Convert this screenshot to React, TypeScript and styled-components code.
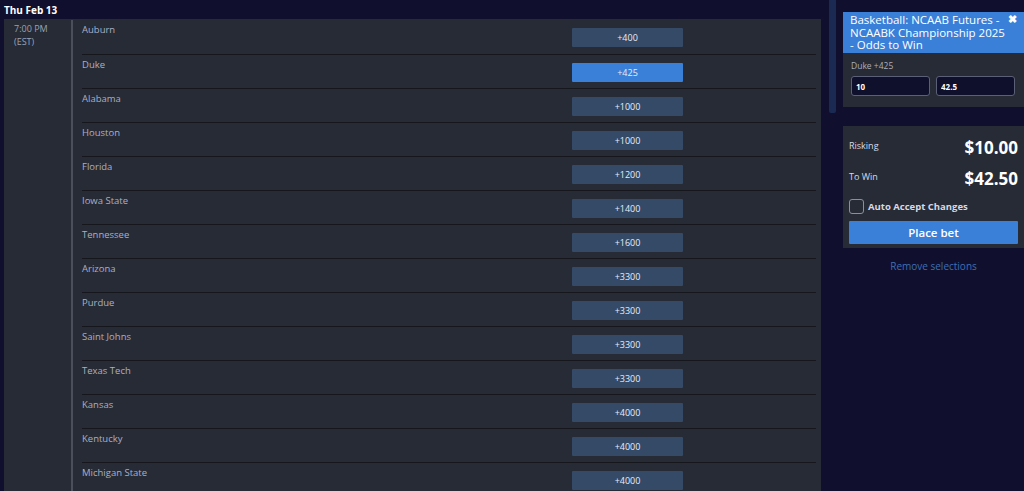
import React from "react";
import styled, { createGlobalStyle } from "styled-components";

const GlobalStyle = createGlobalStyle`
	html, body {
		margin: 0;
		padding: 0;
		background: #10102e;
		overflow: hidden;
	}
	body {
		font-family: "Open Sans", "Noto Sans", sans-serif;
		color: #fff;
	}
`;

type Line = { team: string; odds: string; selected?: boolean };

const LINES: Line[] = [
	{ team: "Auburn", odds: "+400" },
	{ team: "Duke", odds: "+425", selected: true },
	{ team: "Alabama", odds: "+1000" },
	{ team: "Houston", odds: "+1000" },
	{ team: "Florida", odds: "+1200" },
	{ team: "Iowa State", odds: "+1400" },
	{ team: "Tennessee", odds: "+1600" },
	{ team: "Arizona", odds: "+3300" },
	{ team: "Purdue", odds: "+3300" },
	{ team: "Saint Johns", odds: "+3300" },
	{ team: "Texas Tech", odds: "+3300" },
	{ team: "Kansas", odds: "+4000" },
	{ team: "Kentucky", odds: "+4000" },
	{ team: "Michigan State", odds: "+4000" },
];

const Page = styled.div`
	display: flex;
	align-items: flex-start;
	height: 491px;
	overflow: hidden;
`;

const Main = styled.div`
	width: 817px;
	margin-left: 4px;
	margin-top: -10px;
	flex-shrink: 0;
`;

const ColumnHeads = styled.div`
	display: grid;
	grid-template-columns: 568px 111px 1fr;
	height: 11px;
	font-size: 9px;
	line-height: 9px;
	color: #8d93a8;
`;

const HeadLabel = styled.div`
	grid-column: 2;
	text-align: center;
`;

const DateHead = styled.div`
	height: 18px;
	font-size: 10px;
	font-weight: 700;
	line-height: 18px;
	color: #fff;
`;

const Table = styled.div`
	display: flex;
	background: #272b36;
	padding-top: 1px;
`;

const TimeCol = styled.div`
	width: 69px;
	flex-shrink: 0;
	border-right: 2px solid #4b4f5b;
	padding: 2px 0 0 10px;
	box-sizing: border-box;
	font-size: 9px;
	line-height: 13px;
	color: #9ca2b2;
`;

const Rows = styled.div`
	flex: 1;
	padding-left: 9px;
`;

const Row = styled.div`
	display: grid;
	grid-template-columns: 1fr 111px 133px;
	align-items: start;
	height: 34px;
	box-sizing: border-box;
	border-bottom: 1px solid #15171d;
	margin-right: 5px;

	&:first-child {
		height: 35px;
	}
`;

const TeamName = styled.div`
	padding-top: 4px;
	font-size: 9.5px;
	line-height: 12px;
	color: #a7b0c8;
`;

const OddsButton = styled.button<{ $selected?: boolean }>`
	margin-top: 8px;
	height: 19px;
	border: none;
	border-radius: 1px;
	padding: 0;
	background: ${(p) => (p.$selected ? "#3a80d8" : "#344a66")};
	color: #e8edf6;
	font-family: inherit;
	font-size: 9px;
	cursor: pointer;
`;

const ScrollStrip = styled.div`
	width: 7px;
	height: 113px;
	margin-left: 8px;
	background: #1a2a52;
	border-radius: 0 0 2px 2px;
	flex-shrink: 0;
`;

const Sidebar = styled.div`
	width: 181px;
	margin-left: 7px;
	padding-top: 12px;
	flex-shrink: 0;
`;

const Card = styled.div`
	background: #272b36;
`;

const CardHead = styled.div`
	position: relative;
	background: #3a80d8;
	padding: 2px 18px 2px 7px;
	height: 41px;
	box-sizing: border-box;
	font-size: 11.5px;
	line-height: 12.5px;
	color: #fff;
`;

const Close = styled.span`
	position: absolute;
	top: 1px;
	right: 7px;
	font-size: 11px;
	font-weight: 700;
`;

const CardBody = styled.div`
	padding: 7px 9px 11px 8px;
`;

const Selection = styled.div`
	font-size: 8.5px;
	line-height: 11px;
	color: #a9afbf;
	margin-bottom: 5px;
`;

const Inputs = styled.div`
	display: grid;
	grid-template-columns: 1fr 1fr;
	gap: 6px;
`;

const Field = styled.input`
	height: 20px;
	box-sizing: border-box;
	background: #0f102b;
	border: 1px solid #5b6078;
	border-radius: 3px;
	color: #fff;
	font-family: inherit;
	font-size: 8px;
	font-weight: 700;
	padding: 0 4px;
	width: 100%;
	outline: none;
`;

const Summary = styled.div`
	margin-top: 19px;
	background: #272b36;
	padding: 5px 6px 4px 6px;
`;

const SumRow = styled.div`
	display: flex;
	justify-content: space-between;
	align-items: center;
	height: 30px;
	padding-top: 1px;
`;

const SumLabel = styled.span`
	font-size: 9px;
	color: #d7dbe6;
	margin-top: -4px;
`;

const SumValue = styled.span`
	font-size: 17px;
	font-weight: 700;
	color: #fff;
`;

const CheckRow = styled.label`
	display: flex;
	align-items: center;
	gap: 4px;
	margin-top: 6px;
	font-size: 9.5px;
	font-weight: 700;
	color: #d6d9e2;
`;

const Box = styled.span`
	width: 15px;
	height: 15px;
	border: 1px solid #8a8f9d;
	border-radius: 3px;
	box-sizing: border-box;
`;

const PlaceBet = styled.button`
	display: block;
	width: 100%;
	height: 23px;
	margin-top: 7px;
	border: none;
	border-radius: 1px;
	background: #3a80d8;
	color: #fff;
	font-family: inherit;
	font-size: 11.5px;
	font-weight: 600;
`;

const Remove = styled.div`
	margin-top: 11px;
	text-align: center;
	font-size: 10px;
	color: #3e6fb5;
`;

export default function App() {
	return (
		<>
			<GlobalStyle />
			<Page>
				<Main>
					<ColumnHeads>
						<HeadLabel>Money Line</HeadLabel>
					</ColumnHeads>
					<DateHead>Thu Feb 13</DateHead>
					<Table>
						<TimeCol>
							7:00 PM
							<br />
							(EST)
						</TimeCol>
						<Rows>
							{LINES.map((l) => (
								<Row key={l.team}>
									<TeamName>{l.team}</TeamName>
									<OddsButton $selected={l.selected}>{l.odds}</OddsButton>
								</Row>
							))}
						</Rows>
					</Table>
				</Main>
				<ScrollStrip />
				<Sidebar>
					<Card>
						<CardHead>
							Basketball: NCAAB Futures - NCAABK Championship 2025 - Odds to Win
							<Close>✖</Close>
						</CardHead>
						<CardBody>
							<Selection>Duke +425</Selection>
							<Inputs>
								<Field defaultValue="10" />
								<Field defaultValue="42.5" />
							</Inputs>
						</CardBody>
					</Card>
					<Summary>
						<SumRow>
							<SumLabel>Risking</SumLabel>
							<SumValue>$10.00</SumValue>
						</SumRow>
						<SumRow>
							<SumLabel>To Win</SumLabel>
							<SumValue>$42.50</SumValue>
						</SumRow>
						<CheckRow>
							<Box />
							Auto Accept Changes
						</CheckRow>
						<PlaceBet>Place bet</PlaceBet>
					</Summary>
					<Remove>Remove selections</Remove>
				</Sidebar>
			</Page>
		</>
	);
}
